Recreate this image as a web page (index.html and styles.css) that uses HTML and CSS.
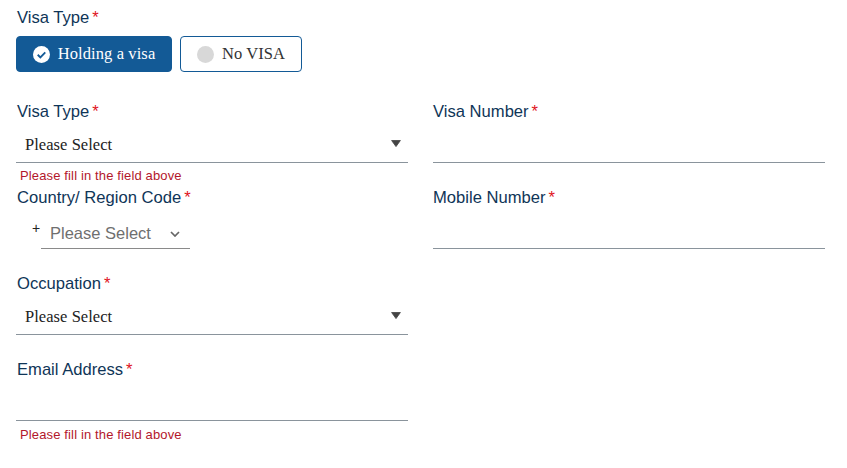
FILE: index.html
```html
<!DOCTYPE html>
<html lang="en">
<head>
<meta charset="utf-8">
<title>Visa form</title>
<link rel="stylesheet" href="styles.css">
</head>
<body>
<form class="form">
  <div class="label top-label">Visa Type<span class="req">*</span></div>
  <div class="choices">
    <button type="button" class="choice active">
      <svg class="ico" viewBox="0 0 18 18" width="17" height="17"><circle cx="9" cy="9" r="9" fill="#fff"/><path d="M5 9.3l2.8 2.7L13 6.8" fill="none" stroke="#135a96" stroke-width="2"/></svg>
      Holding a visa
    </button>
    <button type="button" class="choice">
      <span class="dot"></span>
      No VISA
    </button>
  </div>
  <div class="grid">
    <div class="field">
      <div class="label">Visa Type<span class="req">*</span></div>
      <div class="control select"><span>Please Select</span><svg class="caret" viewBox="0 0 10 7" width="10" height="7"><path d="M0.6 0.5h8.8L5 6.6z" fill="#444" stroke="#444" stroke-width="0.8" stroke-linejoin="round"/></svg></div>
      <div class="error">Please fill in the field above</div>
    </div>
    <div class="field">
      <div class="label">Visa Number<span class="req">*</span></div>
      <div class="control"></div>
    </div>
    <div class="field">
      <div class="label">Country/ Region Code<span class="req">*</span></div>
      <div class="code">
        <span class="plus">+</span>
        <div class="code-select">
          <span>Please Select</span>
          <svg viewBox="0 0 10 6" width="10" height="6"><path d="M1 1l4 4 4-4" fill="none" stroke="#666" stroke-width="1.7"/></svg>
        </div>
      </div>
    </div>
    <div class="field">
      <div class="label">Mobile Number<span class="req">*</span></div>
      <div class="control"></div>
    </div>
    <div class="field">
      <div class="label">Occupation<span class="req">*</span></div>
      <div class="control select"><span>Please Select</span><svg class="caret" viewBox="0 0 10 7" width="10" height="7"><path d="M0.6 0.5h8.8L5 6.6z" fill="#444" stroke="#444" stroke-width="0.8" stroke-linejoin="round"/></svg></div>
    </div>
    <div class="field empty"></div>
    <div class="field">
      <div class="label">Email Address<span class="req">*</span></div>
      <div class="control"></div>
      <div class="error error-last">Please fill in the field above</div>
    </div>
  </div>
</form>
</body>
</html>
```
FILE: styles.css
```css
* { box-sizing: border-box; }
html, body { margin: 0; padding: 0; background: #fff; }
body { width: 847px; height: 468px; overflow: hidden; font-family: "Liberation Sans", Arial, sans-serif; }
.form { padding: 7px 22px 0 16px; }
.label { font-size: 16.6px; line-height: 22px; color: #0f3557; height: 22px; padding-left: 1px; }
.grid .field:nth-child(even) .label { padding-left: 0; }
.req { color: #e0141e; margin-left: 3px; }
.choices { display: flex; gap: 8px; margin-top: 7px; }
.choice {
  height: 36px; padding: 0; display: flex; align-items: center; justify-content: center;
  background: #fff; border: 1px solid #135a96; border-radius: 4px;
  font-family: "Liberation Serif", serif; font-size: 16.5px; letter-spacing: 0.1px; color: #333; width: 122px; gap: 8px;
}
.choice.active { width: 156px; background: #135a96; color: #fff; }
.ico { flex: none; }
.dot { width: 17px; height: 17px; border-radius: 50%; background: #d8d8d8; }
.grid { display: grid; grid-template-columns: 392px 392px; column-gap: 25px; margin-top: 29px; grid-auto-rows: 86px; }
.field { position: relative; }
.control {
  height: 39px; margin-top: 1px; border-bottom: 1px solid #8a949c;
  display: flex; align-items: center; justify-content: space-between;
}
.select { padding: 4px 7px 0 9px; font-family: "Liberation Serif", serif; font-size: 16.5px; letter-spacing: 0.05px; color: #222; }
.caret { margin-top: -3px; }
.error { font-size: 13px; line-height: 14px; color: #b3172b; margin: 6px 0 0 4px; letter-spacing: 0.14px; }
.error-last { margin-top: 7px; }
.code { display: flex; margin: 1px 0 0 16px; }
.plus { font-size: 14px; line-height: 16px; color: #222; width: 9px; margin-top: 10px; }
.code-select {
  width: 149px; height: 39px; border-bottom: 1px solid #8a8a8a; display: flex; align-items: center;
  justify-content: space-between; padding: 9px 10px 0 9px; font-size: 16.5px; color: #6f6f6f;
}
```
